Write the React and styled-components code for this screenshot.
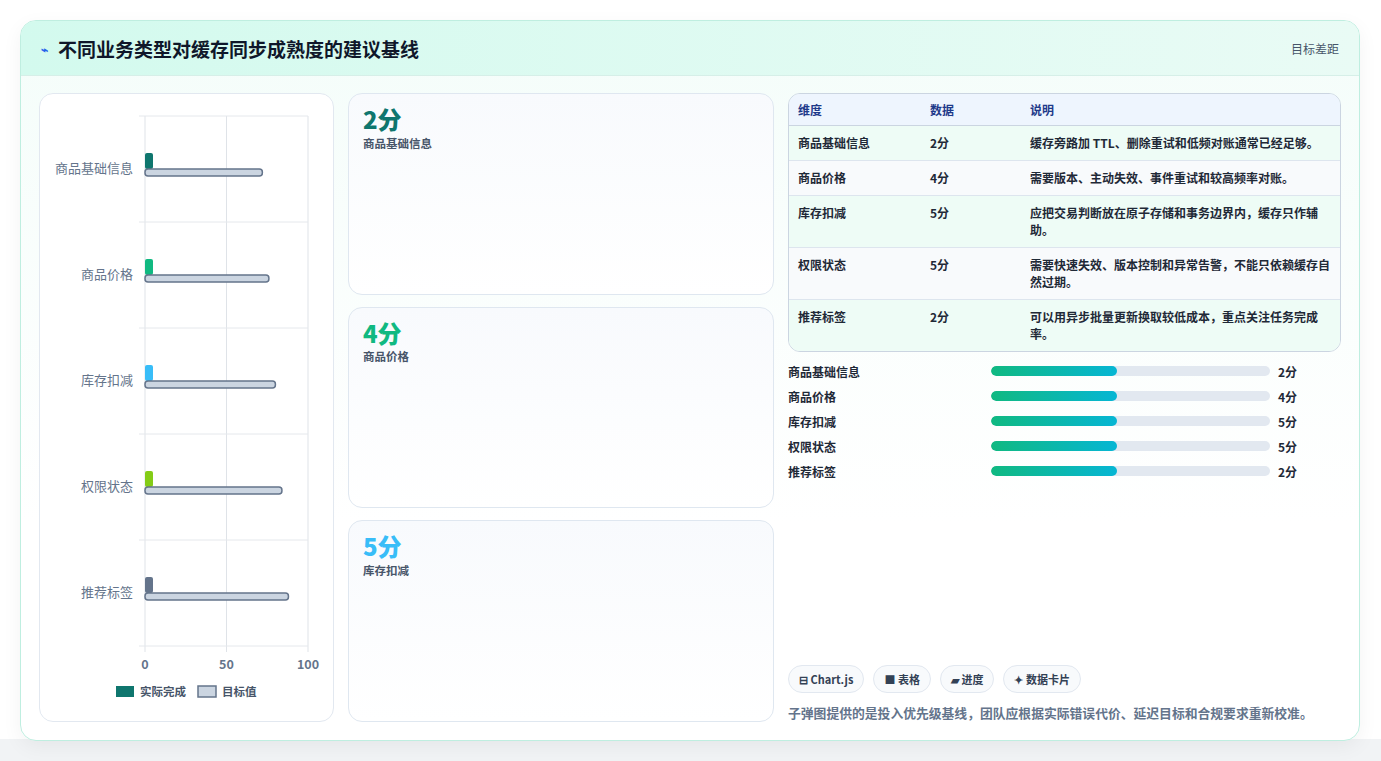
import React from 'react';
import styled, { createGlobalStyle } from 'styled-components';

const Global = createGlobalStyle`
  body { margin: 0; background: #f1f3f5; font-family: "Noto Sans CJK SC", "Noto Sans", sans-serif; }
`;

const Page = styled.div`
  width: 1381px; height: 761px; padding: 20px 21px 22px 20px; box-sizing: border-box;
  background: linear-gradient(#fff 0 739px, #f1f3f5 739px);
`;
const Card = styled.div`
  height: 100%; border: 1px solid #bfeee0; border-radius: 16px; overflow: hidden;
  background: linear-gradient(180deg, #f4fdfa, #ffffff 70%);
  box-shadow: 0 6px 20px rgba(0,0,0,0.05);
  display: flex; flex-direction: column;
`;
const Header = styled.div`
  height: 54px; flex: none; display: flex; align-items: center; justify-content: space-between;
  padding: 0 20px; background: linear-gradient(90deg, #d3faee, #e9fbf5);
  border-bottom: 1px solid #d6efe8;
`;
const Title = styled.h1`
  margin: 0; font-size: 19px; font-weight: 700; color: #0f172a; display: flex; align-items: center; gap: 10px;
`;
const Icon = styled.span` color: #2563eb; font-size: 12px; `;
const HeaderRight = styled.span` font-size: 12px; color: #475569; `;
const Body = styled.div`
  flex: 1; display: grid; grid-template-columns: 295px 426px 553px; gap: 14px;
  padding: 17px 18px 18px 18px;
`;
const Panel = styled.div`
  background: #fff; border: 1px solid #e2e8f0; border-radius: 14px;
`;
const Middle = styled.div` display: grid; grid-template-rows: repeat(3, 1fr); gap: 12px; `;
const Stat = styled.div`
  border: 1px solid #dfe7f0; border-radius: 14px; padding: 11px 14px;
  background: linear-gradient(180deg, #f8fafd, #ffffff);
`;
const StatValue = styled.div` font-size: 24px; font-weight: 800; color: ${p => p.c}; line-height: 1.2; `;
const StatLabel = styled.div` font-size: 11.5px; font-weight: 600; color: #475569; margin-top: 1px; `;
const Right = styled.div` display: flex; flex-direction: column; `;
const Table = styled.table`
  width: 100%; border-collapse: separate; border-spacing: 0; border: 1px solid #cbd5e1;
  border-radius: 12px; overflow: hidden; font-size: 12px; font-weight: 600; color: #1f2937;
  th { background: #eef5fe; color: #1e3a8a; text-align: left; padding: 7px 9px; height: 17px; border-bottom: 1px solid #cbd5e1; }
  td { padding: 8px 9px 9px; border-bottom: 1px solid #dde5ee; vertical-align: top; line-height: 17px; }
  tr:nth-child(odd) td { background: #eefcf6; }
  tr:nth-child(even) td { background: #f8fafc; }
  tr:last-child td { border-bottom: none; }
`;
const Bars = styled.div` display: flex; flex-direction: column; gap: 7px; margin-top: 10px; `;
const BarRow = styled.div`
  display: grid; grid-template-columns: 195px 279px 1fr; gap: 8px; align-items: center;
  font-size: 12px; font-weight: 700; color: #1f2937; height: 18px;
`;
const Track = styled.div` height: 10px; border-radius: 5px; background: #e2e8f0; overflow: hidden; `;
const Fill = styled.div` height: 100%; border-radius: 5px; background: linear-gradient(90deg, #10b981, #06b6d4); `;
const Chips = styled.div` margin-top: auto; display: flex; gap: 9px; `;
const Chip = styled.span`
  border: 1px solid #e2e8f0; border-radius: 14px; padding: 5px 10px; font-size: 11px; font-weight: 700;
  color: #334155; background: #f8fafc;
`;
const Note = styled.p` margin: 10px 0 0; font-size: 12.8px; font-weight: 600; color: #64748b; `;

const rows = [
  ['商品基础信息', '2分', '缓存旁路加 TTL、删除重试和低频对账通常已经足够。'],
  ['商品价格', '4分', '需要版本、主动失效、事件重试和较高频率对账。'],
  ['库存扣减', '5分', '应把交易判断放在原子存储和事务边界内，缓存只作辅助。'],
  ['权限状态', '5分', '需要快速失效、版本控制和异常告警，不能只依赖缓存自然过期。'],
  ['推荐标签', '2分', '可以用异步批量更新换取较低成本，重点关注任务完成率。'],
];
const colors = ['#0f766e', '#10b981', '#38bdf8', '#84cc16', '#64748b'];
const targets = [72, 76, 80, 84, 88];

function Chart() {
  const x0 = 105, w = 163, y0 = 22, h = 530, step = h / 5;
  return (
    <svg width="295" height="627" style={{ display: 'block' }}>
      {[0, 50, 100].map(v => (
        <line key={v} x1={x0 + w * v / 100} x2={x0 + w * v / 100} y1={y0} y2={y0 + h + 6} stroke="#dfe3e8" />
      ))}
      {[0, 1, 2, 3, 4, 5].map(i => (
        <line key={i} x1={x0 - 6} x2={x0 + w} y1={y0 + i * step} y2={y0 + i * step} stroke="#e5e8ec" />
      ))}
      {rows.map((r, i) => {
        const cy = y0 + i * step + step / 2;
        return (
          <g key={i}>
            <text x={x0 - 12} y={cy + 4} textAnchor="end" fontSize="13" fill="#64748b">{r[0]}</text>
            <rect x={x0} y={cy - 16} width={8} height={16} rx={2} fill={colors[i]} />
            <rect x={x0} y={cy} width={w * targets[i] / 100} height={7} rx={3} fill="#cbd5e1" stroke="#64748b" strokeWidth="1.5" />
          </g>
        );
      })}
      {[0, 50, 100].map(v => (
        <text key={v} x={x0 + w * v / 100} y={y0 + h + 23} textAnchor="middle" fontSize="12.5" fontWeight="600" fill="#64748b">{v}</text>
      ))}
      <rect x="76" y="592" width="18" height="11" fill="#0f766e" />
      <text x="100" y="602" fontSize="11.5" fontWeight="600" fill="#475569">实际完成</text>
      <rect x="158" y="592" width="18" height="11" fill="#cbd5e1" stroke="#64748b" strokeWidth="1.5" />
      <text x="182" y="602" fontSize="11.5" fontWeight="600" fill="#475569">目标值</text>
    </svg>
  );
}

export default function App() {
  return (
    <Page>
      <Global />
      <Card>
        <Header>
          <Title><Icon>⌁</Icon>不同业务类型对缓存同步成熟度的建议基线</Title>
          <HeaderRight>目标差距</HeaderRight>
        </Header>
        <Body>
          <Panel><Chart /></Panel>
          <Middle>
            <Stat><StatValue c="#0f766e">2分</StatValue><StatLabel>商品基础信息</StatLabel></Stat>
            <Stat><StatValue c="#10b981">4分</StatValue><StatLabel>商品价格</StatLabel></Stat>
            <Stat><StatValue c="#38bdf8">5分</StatValue><StatLabel>库存扣减</StatLabel></Stat>
          </Middle>
          <Right>
            <Table>
              <thead><tr><th style={{ width: 114 }}>维度</th><th style={{ width: 82 }}>数据</th><th>说明</th></tr></thead>
              <tbody>{rows.map(r => <tr key={r[0]}><td>{r[0]}</td><td>{r[1]}</td><td>{r[2]}</td></tr>)}</tbody>
            </Table>
            <Bars>
              {rows.map(r => (
                <BarRow key={r[0]}><span>{r[0]}</span><Track><Fill style={{ width: '45%' }} /></Track><span>{r[1]}</span></BarRow>
              ))}
            </Bars>
            <Chips>
              <Chip>⊟ Chart.js</Chip><Chip>■ 表格</Chip><Chip>▰ 进度</Chip><Chip>✦ 数据卡片</Chip>
            </Chips>
            <Note>子弹图提供的是投入优先级基线，团队应根据实际错误代价、延迟目标和合规要求重新校准。</Note>
          </Right>
        </Body>
      </Card>
    </Page>
  );
}
